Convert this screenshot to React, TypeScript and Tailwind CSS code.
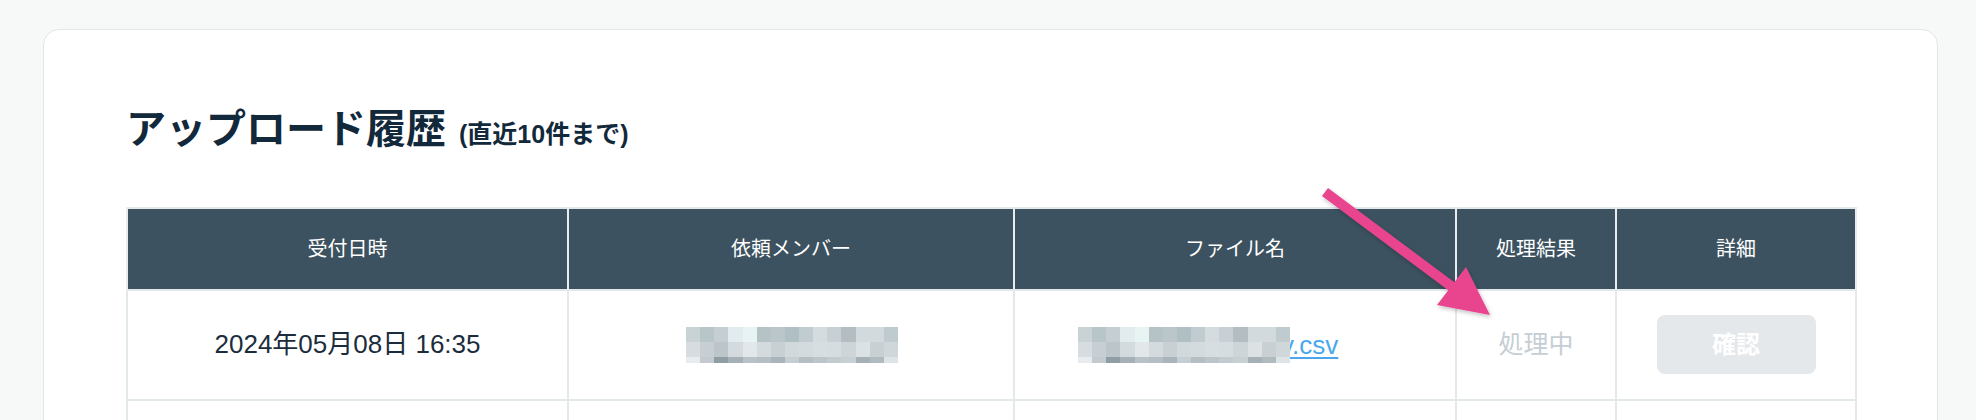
import React from "react";

const rowA = ["#c9d3d6", "#b8c6ca", "#c5ced2", "#e2ecee", "#e8f3f4", "#b5c3c7", "#bac6ca", "#b0bfc3", "#c0ccd0", "#d4dce0", "#c8d0d5", "#b3bdc2", "#d2dadd", "#d3dade", "#c0cbcf"];
const rowB = ["#d6dcdf", "#c8cfd4", "#bcc5ca", "#d4dbde", "#e2e8ea", "#d4dbde", "#c8d0d4", "#d1d9dd", "#d4dbdf", "#d7dee1", "#d6dde0", "#cdd5d9", "#dce2e4", "#c8d0d4", "#cfd7db"];
const rowC = ["#e8ecee", "#c4cbd0", "#8f9ea5", "#a5b1b7", "#b8c2c7", "#b4bec3", "#a9b5ba", "#c5ced2", "#b4bec3", "#bcc5ca", "#c3cbd0", "#c8d0d4", "#a6b1b7", "#b0bbc0", "#dde3e6"];

function Mosaic({ shift = 0 }: { shift?: number }) {
  const rot = (r: string[]) => r.slice(shift).concat(r.slice(0, shift));
  const rows = [rot(rowA), rot(rowB), rot(rowC)];
  return (
    <div className="relative z-10 grid w-[212px] grid-cols-[repeat(15,1fr)] grid-rows-[15px_15px_6px]">
      {rows.map((r, i) =>
        r.map((c, j) => <div key={i + "-" + j} style={{ backgroundColor: c }} />)
      )}
    </div>
  );
}

export default function App() {
  return (
    <div className="relative min-h-[420px] overflow-hidden bg-[#f7f8f8] font-['Liberation_Sans','Noto_Sans_CJK_JP',sans-serif] text-[#1b2d3c]">
      <div className="pl-[43px] pr-[38px] pt-[29px]">
        <div className="min-h-[520px] rounded-2xl border border-[#e3e6e9] bg-white px-[82px] pt-[75px]">
          <div className="flex items-baseline">
            <h2 className="text-[40px] font-bold leading-[48px] text-[#12293b]">アップロード履歴</h2>
            <span className="ml-[13px] text-[25px] font-bold text-[#12293b]">(直近10件まで)</span>
          </div>
          <table className="mt-[53px] w-[1729px] table-fixed border-collapse border-2 border-[#e3e8eb]">
            <colgroup>
              <col className="w-[441px]" />
              <col className="w-[446px]" />
              <col className="w-[442px]" />
              <col className="w-[160px]" />
              <col className="w-[240px]" />
            </colgroup>
            <thead>
              <tr className="h-[82px] bg-[#3c5260] text-[20px] font-normal text-white">
                <th className="border-x-2 border-x-[#e8ecee] font-normal">受付日時</th>
                <th className="border-x-2 border-x-[#e8ecee] font-normal">依頼メンバー</th>
                <th className="border-x-2 border-x-[#e8ecee] font-normal">ファイル名</th>
                <th className="border-x-2 border-x-[#e8ecee] font-normal">処理結果</th>
                <th className="border-x-2 border-x-[#e8ecee] font-normal">詳細</th>
              </tr>
            </thead>
            <tbody>
              <tr className="h-[110px]">
                <td className="border-2 border-[#e3e8eb] text-center text-[26px]">2024年05月08日 16:35</td>
                <td className="border-2 border-[#e3e8eb]">
                  <div className="flex justify-center pl-[2px]">
                    <Mosaic />
                  </div>
                </td>
                <td className="border-2 border-[#e3e8eb]">
                  <div className="flex items-center pl-[63px]">
                    <Mosaic shift={0} />
                    <a className="-ml-[9px] text-[26px] leading-none text-[#4aa7ef] underline underline-offset-[3px]" href="#">
                      v.csv
                    </a>
                  </div>
                </td>
                <td className="border-2 border-[#e3e8eb] text-center text-[25px] text-[#c5ced4]">処理中</td>
                <td className="border-2 border-[#e3e8eb]">
                  <div className="flex justify-center">
                    <button className="h-[59px] w-[159px] rounded-lg bg-[#e4e8eb] text-[24px] font-bold text-white" disabled>
                      確認
                    </button>
                  </div>
                </td>
              </tr>
              <tr className="h-[110px]">
                <td className="border-2 border-[#e3e8eb]" />
                <td className="border-2 border-[#e3e8eb]" />
                <td className="border-2 border-[#e3e8eb]" />
                <td className="border-2 border-[#e3e8eb]" />
                <td className="border-2 border-[#e3e8eb]" />
              </tr>
            </tbody>
          </table>
        </div>
      </div>
      <svg className="pointer-events-none absolute left-0 top-0 z-20 h-[420px] w-[1976px]" viewBox="0 0 1976 420">
        <defs>
          <filter id="sh" x="-20%" y="-20%" width="140%" height="140%">
            <feDropShadow dx="1" dy="2" stdDeviation="2" floodColor="#000" floodOpacity="0.25" />
          </filter>
        </defs>
        <g filter="url(#sh)" fill="#e9448f">
          <line x1="1325" y1="192" x2="1455" y2="289" stroke="#e9448f" strokeWidth="10" />
          <polygon points="1490,315 1466,267 1437,305" />
        </g>
      </svg>
    </div>
  );
}
